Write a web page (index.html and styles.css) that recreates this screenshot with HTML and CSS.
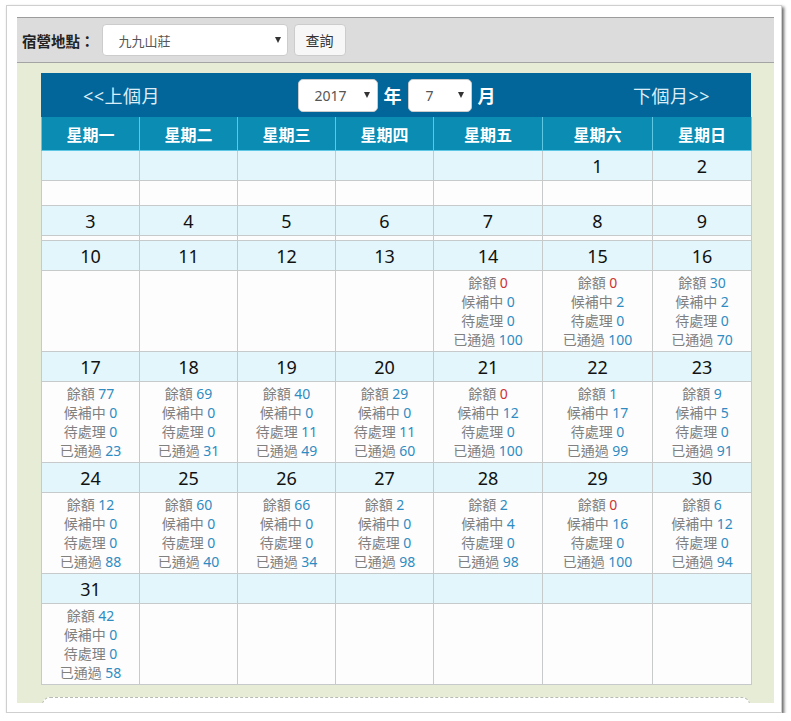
FILE: index.html
```html
<!DOCTYPE html>
<html lang="zh-Hant">
<head>
<meta charset="utf-8">
<title>宿營地點</title>
<link rel="stylesheet" href="styles.css">
</head>
<body>
<div class="frame">
  <div class="toolbar">
    <span class="label">宿營地點：</span>
    <div class="fake-select site"><span>九九山莊</span><span class="caret"></span></div>
    <div class="btn">查詢</div>
  </div>
  <div class="panel">
    <div class="calendar">
      <div class="nav">
        <span class="nav-link">&lt;&lt;上個月</span>
        <div class="nav-center">
          <div class="fake-select year"><span>2017</span><span class="caret"></span></div>
          <span class="unit">年</span>
          <div class="fake-select month"><span>7</span><span class="caret"></span></div>
          <span class="unit">月</span>
        </div>
        <span class="nav-link">下個月&gt;&gt;</span>
      </div>
      <table class="grid">
        <colgroup>
          <col class="c98"><col class="c98"><col class="c98"><col class="c98"><col class="c109"><col class="c110"><col class="c99">
        </colgroup>
        <thead>
          <tr><th>星期一</th><th>星期二</th><th>星期三</th><th>星期四</th><th>星期五</th><th>星期六</th><th>星期日</th></tr>
        </thead>
        <tbody>
          <tr class="days"><td></td><td></td><td></td><td></td><td></td><td>1</td><td>2</td></tr>
          <tr class="blank tall"><td></td><td></td><td></td><td></td><td></td><td></td><td></td></tr>
          <tr class="days"><td>3</td><td>4</td><td>5</td><td>6</td><td>7</td><td>8</td><td>9</td></tr>
          <tr class="blank thin"><td></td><td></td><td></td><td></td><td></td><td></td><td></td></tr>
          <tr class="days"><td>10</td><td>11</td><td>12</td><td>13</td><td>14</td><td>15</td><td>16</td></tr>
          <tr class="info">
            <td></td><td></td><td></td><td></td>
            <td><div>餘額 <span class="n zero">0</span></div><div>候補中 <span class="n">0</span></div><div>待處理 <span class="n">0</span></div><div>已通過 <span class="n">100</span></div></td>
            <td><div>餘額 <span class="n zero">0</span></div><div>候補中 <span class="n">2</span></div><div>待處理 <span class="n">0</span></div><div>已通過 <span class="n">100</span></div></td>
            <td><div>餘額 <span class="n">30</span></div><div>候補中 <span class="n">2</span></div><div>待處理 <span class="n">0</span></div><div>已通過 <span class="n">70</span></div></td>
          </tr>
          <tr class="days"><td>17</td><td>18</td><td>19</td><td>20</td><td>21</td><td>22</td><td>23</td></tr>
          <tr class="info">
            <td><div>餘額 <span class="n">77</span></div><div>候補中 <span class="n">0</span></div><div>待處理 <span class="n">0</span></div><div>已通過 <span class="n">23</span></div></td>
            <td><div>餘額 <span class="n">69</span></div><div>候補中 <span class="n">0</span></div><div>待處理 <span class="n">0</span></div><div>已通過 <span class="n">31</span></div></td>
            <td><div>餘額 <span class="n">40</span></div><div>候補中 <span class="n">0</span></div><div>待處理 <span class="n">11</span></div><div>已通過 <span class="n">49</span></div></td>
            <td><div>餘額 <span class="n">29</span></div><div>候補中 <span class="n">0</span></div><div>待處理 <span class="n">11</span></div><div>已通過 <span class="n">60</span></div></td>
            <td><div>餘額 <span class="n zero">0</span></div><div>候補中 <span class="n">12</span></div><div>待處理 <span class="n">0</span></div><div>已通過 <span class="n">100</span></div></td>
            <td><div>餘額 <span class="n">1</span></div><div>候補中 <span class="n">17</span></div><div>待處理 <span class="n">0</span></div><div>已通過 <span class="n">99</span></div></td>
            <td><div>餘額 <span class="n">9</span></div><div>候補中 <span class="n">5</span></div><div>待處理 <span class="n">0</span></div><div>已通過 <span class="n">91</span></div></td>
          </tr>
          <tr class="days"><td>24</td><td>25</td><td>26</td><td>27</td><td>28</td><td>29</td><td>30</td></tr>
          <tr class="info">
            <td><div>餘額 <span class="n">12</span></div><div>候補中 <span class="n">0</span></div><div>待處理 <span class="n">0</span></div><div>已通過 <span class="n">88</span></div></td>
            <td><div>餘額 <span class="n">60</span></div><div>候補中 <span class="n">0</span></div><div>待處理 <span class="n">0</span></div><div>已通過 <span class="n">40</span></div></td>
            <td><div>餘額 <span class="n">66</span></div><div>候補中 <span class="n">0</span></div><div>待處理 <span class="n">0</span></div><div>已通過 <span class="n">34</span></div></td>
            <td><div>餘額 <span class="n">2</span></div><div>候補中 <span class="n">0</span></div><div>待處理 <span class="n">0</span></div><div>已通過 <span class="n">98</span></div></td>
            <td><div>餘額 <span class="n">2</span></div><div>候補中 <span class="n">4</span></div><div>待處理 <span class="n">0</span></div><div>已通過 <span class="n">98</span></div></td>
            <td><div>餘額 <span class="n zero">0</span></div><div>候補中 <span class="n">16</span></div><div>待處理 <span class="n">0</span></div><div>已通過 <span class="n">100</span></div></td>
            <td><div>餘額 <span class="n">6</span></div><div>候補中 <span class="n">12</span></div><div>待處理 <span class="n">0</span></div><div>已通過 <span class="n">94</span></div></td>
          </tr>
          <tr class="days"><td>31</td><td></td><td></td><td></td><td></td><td></td><td></td></tr>
          <tr class="info">
            <td><div>餘額 <span class="n">42</span></div><div>候補中 <span class="n">0</span></div><div>待處理 <span class="n">0</span></div><div>已通過 <span class="n">58</span></div></td>
            <td></td><td></td><td></td><td></td><td></td><td></td>
          </tr>
        </tbody>
      </table>
    </div>
    <div class="note-box"></div>
  </div>
</div>
</body>
</html>
```

FILE: styles.css
```css
html, body {
  margin: 0;
  padding: 0;
  background: #ffffff;
}

body {
  font-family: "Noto Sans", "Noto Sans CJK TC", sans-serif;
  color: #222;
}

.frame {
  margin: 5px 0 0 6px;
  width: 757px;
  height: 687px;
  padding: 11px 7px 8px 10px;
  border: 1px solid #cfcfcf;
  background: #ffffff;
  box-shadow: 2px 2px 3px rgba(0, 0, 0, 0.6);
}

/* top toolbar */
.toolbar {
  height: 44px;
  border-top: 1px solid #9c9c9c;
  border-bottom: 1px solid #a4a4a4;
  background: #dcdcdc;
  display: flex;
  align-items: center;
  padding-left: 5px;
}

.label {
  font-size: 14.5px;
  font-weight: bold;
  color: #222;
  margin-right: 7px;
}

.fake-select {
  box-sizing: border-box;
  background: #ffffff;
  border: 1px solid #cccccc;
  border-radius: 4px;
  display: flex;
  align-items: center;
  justify-content: space-between;
  color: #555;
}

.caret {
  width: 0;
  height: 0;
  border-left: 3px solid transparent;
  border-right: 3px solid transparent;
  border-top: 6px solid #333;
}

.site {
  width: 186px;
  height: 32px;
  padding: 0 6px 0 16px;
  font-size: 13px;
}

.btn {
  box-sizing: border-box;
  width: 52px;
  height: 32px;
  margin-left: 6px;
  border: 1px solid #cccccc;
  border-radius: 4px;
  background: #f7f7f7;
  font-size: 14px;
  color: #333;
  display: flex;
  align-items: center;
  justify-content: center;
}

/* green panel */
.panel {
  height: 640px;
  box-sizing: border-box;
  background: #e7ecd7;
  overflow: hidden;
  padding: 10px 23px 0 24px;
}

.calendar {
  width: 710px;
}

.nav {
  height: 44px;
  background: #02669a;
  display: flex;
  align-items: center;
  justify-content: space-between;
  padding: 0 41px 0 42px;
}

.nav-link {
  font-size: 18px;
  color: #dcedf8;
  letter-spacing: 0.5px;
}

.nav-center {
  display: flex;
  align-items: center;
}

.year,
.month {
  height: 33px;
  border-radius: 5px;
  font-size: 14px;
}

.year {
  width: 80px;
  padding: 0 7px 0 16px;
}

.month {
  width: 64px;
  padding: 0 7px 0 17px;
}

.unit {
  font-size: 18px;
  font-weight: bold;
  color: #ffffff;
  margin: 0 6px 0 6px;
}

.unit:last-child {
  margin-right: 0;
}

/* table grid */
.grid {
  width: 710px;
  border-collapse: collapse;
  table-layout: fixed;
}

.c98 { width: 98px; }
.c109 { width: 109px; }
.c110 { width: 110px; }
.c99 { width: 99px; }

.grid th {
  height: 33px;
  padding: 0;
  background: #0a8cb3;
  border: 1px solid #5ec7e4;
  border-top: none;
  color: #ffffff;
  font-size: 16px;
  font-weight: bold;
  text-align: center;
}

.grid td {
  padding: 0;
  border: 1px solid #c6caca;
  text-align: center;
}

.days td {
  height: 29px;
  background: #e3f6fb;
  font-size: 18px;
  color: #111;
}

.blank td {
  background: #fdfdfd;
}

.blank.tall td {
  height: 24px;
}

.blank.thin td {
  height: 4px;
}

.info td {
  height: 76px;
  padding: 2px 0 2px;
  vertical-align: top;
  background: #fdfdfd;
  font-size: 14px;
  line-height: 19px;
  color: #808080;
}

.n {
  color: #2f8cc2;
}

.n.zero {
  color: #cc3333;
}

.note-box {
  margin: 12px 0 0 1px;
  width: 708px;
  height: 40px;
  box-sizing: border-box;
  border: 1px dashed #b6bdb0;
  border-radius: 8px;
  background: #ffffff;
}
```
